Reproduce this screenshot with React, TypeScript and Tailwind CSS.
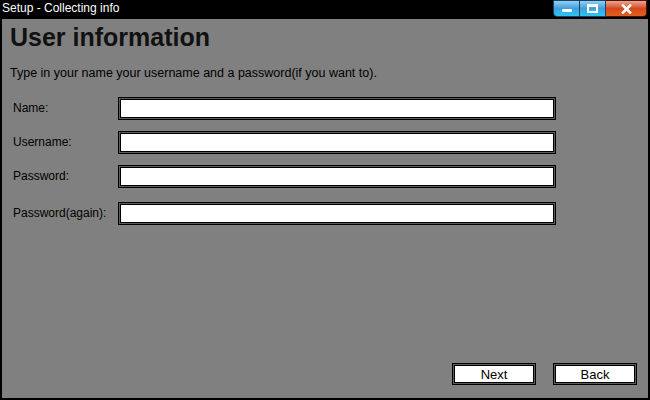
import React from "react";

const fields = ["Name:", "Username:", "Password:", "Password(again):"];

function Field({ label, gap }: { label: string; gap: string }) {
  return (
    <div className={`flex items-center ${gap}`}>
      <label className="w-[105px] shrink-0 text-[12px] text-black">{label}</label>
      <div className="w-[438px] h-[23px] border border-black bg-[#5c5c5c] p-px">
        <div className="h-full border border-black bg-white" />
      </div>
    </div>
  );
}

function WinButton({ label }: { label: string }) {
  return (
    <button className="w-[84px] h-[22px] border border-black bg-[#5c5c5c] p-px">
      <div className="h-full border border-black bg-white flex items-center justify-center text-[13px] text-black leading-none">
        {label}
      </div>
    </button>
  );
}

export default function App() {
  return (
    <div
      className="w-[650px] h-[400px] flex flex-col bg-black overflow-hidden"
      style={{ fontFamily: '"Liberation Sans", Arial, sans-serif' }}
    >
      {/* Title bar */}
      <div className="h-[19px] shrink-0 flex items-start justify-between">
        <span className="pl-[2px] pt-[2px] text-[12px] leading-none text-white">Setup - Collecting info</span>
        <div className="flex mr-[3px]">
          <div className="w-[27px] h-[17px] rounded-bl-[4px] border border-[#1c3f63] bg-gradient-to-b from-[#8fd0f3] via-[#3f9fdc] to-[#29c8f2] flex items-center justify-center">
            <div className="w-[10px] h-[3px] bg-white mt-[4px] rounded-[1px]" />
          </div>
          <div className="w-[26px] h-[17px] border-y border-r border-[#1c3f63] bg-gradient-to-b from-[#8fd0f3] via-[#3f9fdc] to-[#29c8f2] flex items-center justify-center">
            <div className="w-[11px] h-[9px] border-2 border-white border-t-[3px]" />
          </div>
          <div className="w-[41px] h-[17px] rounded-br-[4px] border-y border-r border-[#4a1308] bg-gradient-to-b from-[#e9a48c] via-[#d6471f] to-[#e0611c] flex items-center justify-center">
            <svg width="11" height="10" viewBox="0 0 11 10">
              <path d="M2 1.5 L9 8.5 M9 1.5 L2 8.5" stroke="white" strokeWidth="2.6" strokeLinecap="square" />
            </svg>
          </div>
        </div>
      </div>

      {/* Body */}
      <div className="flex-1 ml-[2px] mr-[2px] mb-[2px] bg-[#808080] flex flex-col">
        <h1 className="pl-[8px] pt-[6px] text-[25px] font-bold leading-none text-[#111]">User information</h1>
        <p className="pl-[8px] mt-[17px] text-[12.5px] leading-none text-black">
          Type in your name your username and a password(if you want to).
        </p>
        <div className="pl-[11px] mt-[17px] flex flex-col">
          <Field label={fields[0]} gap="" />
          <Field label={fields[1]} gap="mt-[11px]" />
          <Field label={fields[2]} gap="mt-[11px]" />
          <Field label={fields[3]} gap="mt-[14px]" />
        </div>
        <div className="mt-auto mb-[13px] flex justify-end gap-[17px] pr-[11px]">
          <WinButton label="Next" />
          <WinButton label="Back" />
        </div>
      </div>
    </div>
  );
}
